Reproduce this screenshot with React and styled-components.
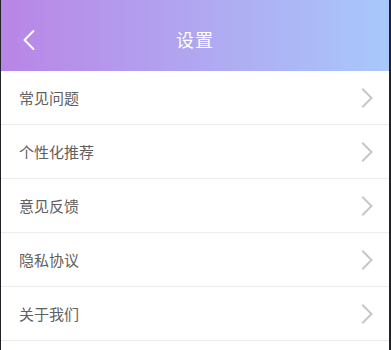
import React from "react";
import styled, { createGlobalStyle } from "styled-components";

const GlobalStyle = createGlobalStyle`
  html, body {
    margin: 0;
    padding: 0;
    background: #1f2328;
  }
  body {
    font-family: "Noto Sans CJK SC", "Noto Sans", sans-serif;
  }
`;

const Page = styled.div`
  margin: 0 2px 0 1px;
  min-height: 350px;
  background: #fff;
`;

const Header = styled.header`
  position: relative;
  height: 71px;
  display: flex;
  align-items: center;
  justify-content: center;
  background: linear-gradient(to right, #b985e6, #a8c8fb);
  color: #fff;
`;

const BackButton = styled.button`
  position: absolute;
  left: 20px;
  top: 29px;
  display: flex;
  padding: 0;
  border: none;
  background: none;
  cursor: pointer;
`;

const Title = styled.h1`
  margin: 0;
  font-size: 18px;
  font-weight: 400;
  letter-spacing: 1px;
  padding-top: 6px;
`;

const List = styled.ul`
  list-style: none;
  margin: 0;
  padding: 0;
`;

const Row = styled.li`
  height: 53px;
  display: flex;
  align-items: center;
  justify-content: space-between;
  padding: 0 14px 0 18px;
  border-bottom: 1px solid #ececec;
  cursor: pointer;
`;

const Label = styled.span`
  font-size: 15px;
  color: #606060;
`;

const Chevron = ({ color, width = 2 }) => (
  <svg width="15" height="20" viewBox="0 0 15 20" fill="none">
    <path
      d="M3 1.5 L11.5 10 L3 18.5"
      stroke={color}
      strokeWidth={width}
      strokeLinecap="square"
    />
  </svg>
);

const BackIcon = () => (
  <svg width="15" height="22" viewBox="0 0 15 22" fill="none">
    <path
      d="M12.5 2 L3.5 11 L12.5 20"
      stroke="#fff"
      strokeWidth="2"
      strokeLinecap="round"
      strokeLinejoin="round"
    />
  </svg>
);

const items = ["常见问题", "个性化推荐", "意见反馈", "隐私协议", "关于我们"];

const App = () => (
  <>
    <GlobalStyle />
    <Page>
      <Header>
        <BackButton aria-label="返回">
          <BackIcon />
        </BackButton>
        <Title>设置</Title>
      </Header>
      <List>
        {items.map((item) => (
          <Row key={item}>
            <Label>{item}</Label>
            <Chevron color="#c6c6c6" />
          </Row>
        ))}
      </List>
    </Page>
  </>
);

export default App;
